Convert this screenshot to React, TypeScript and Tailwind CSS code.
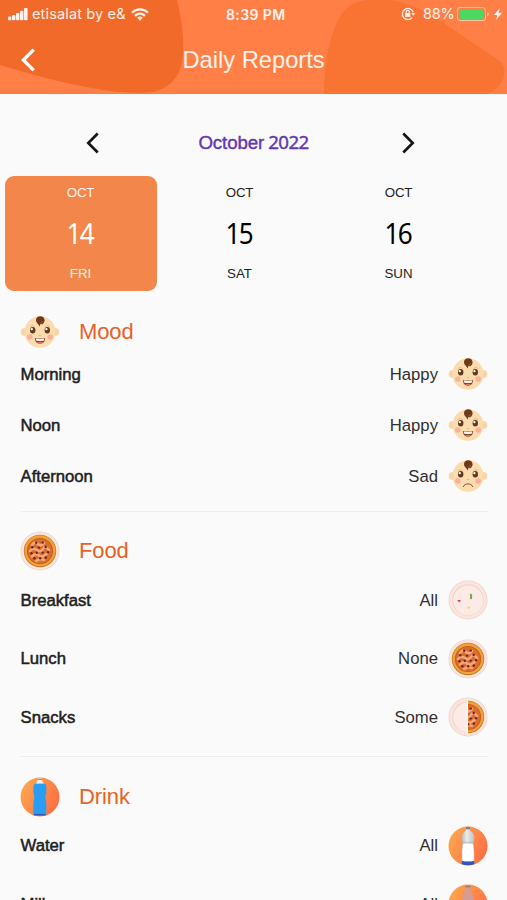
import React from "react";

const HELV = "font-['Liberation_Sans',Arial,sans-serif]";

function Chevron({ dir, className, w }: { dir: "left" | "right"; className: string; w: number }) {
  return (
    <svg viewBox="0 0 14 24" className={className} fill="none" stroke="currentColor" strokeWidth={w}>
      <path d={dir === "left" ? "M12.7 1.7L2.4 12l10.3 10.3" : "M1.3 1.7L11.6 12 1.3 22.3"} />
    </svg>
  );
}

function Baby({ sad = false }: { sad?: boolean }) {
  return (
    <svg viewBox="0 0 40 40" className="size-10 shrink-0">
      <circle cx="4.600" cy="20" r="3.900" fill="#f9d7aa" />
      <circle cx="35.400" cy="20" r="3.900" fill="#f9d7aa" />
      <circle cx="4.800" cy="20.300" r="1.700" fill="#f3cca0" />
      <circle cx="35.200" cy="20.300" r="1.700" fill="#f3cca0" />
      <ellipse cx="20" cy="20" rx="15.500" ry="15.800" fill="#fbdcaf" />
      <circle cx="9.800" cy="25" r="2.800" fill="#f8b29c" />
      <circle cx="30.200" cy="25" r="2.800" fill="#f8b29c" />
      <path d="M19.300 14.600c.4-1.900-3.400-3-3.300-6.500C16.100 5.400 18 4.300 20.100 4.300c2.700 0 4.500 1.600 4.500 4.100 0 2.900-2.700 4.600-4.500 3.700 0 1 .1 1.900-.8 2.500z" fill="#70391b" />
      <path d="M20.400 11.200c1.500.1 2.300-.7 2-2" fill="none" stroke="#b07a50" strokeWidth=".6" />
      <path d="M9.700 14.700q2.500-2.500 5 0M25.300 14.700q2.500-2.500 5 0" fill="none" stroke="#dba878" strokeWidth=".7" />
      <ellipse cx="12.700" cy="18.200" rx="2.700" ry="3.200" fill="#633920" />
      <ellipse cx="27.300" cy="18.200" rx="2.700" ry="3.200" fill="#633920" />
      <circle cx="11.800" cy="17.200" r="1.150" fill="#fff" />
      <circle cx="26.400" cy="17.200" r="1.150" fill="#fff" />
      <path d="M18.800 23.300q1.200 1 2.400 0" fill="none" stroke="#e3aa80" strokeWidth=".8" />
      {sad ? (
        <path d="M15.200 31c1.400-4.200 8.200-4.200 9.600 0" fill="none" stroke="#8c4c31" strokeWidth="1" />
      ) : (
        <>
          <path d="M14.800 26q5.200 1 10.400 0c-.2 3.700-2.300 5.700-5.200 5.700s-5-2-5.200-5.700z" fill="#8e3b2a" />
          <path d="M15.800 26.500q4.200.8 8.400 0v2q-4.200 1-8.400 0z" fill="#fff4e8" />
          <path d="M17.200 30.500q2.800-1.500 5.600 0-2.600 1.800-5.600 0z" fill="#ed7462" />
        </>
      )}
    </svg>
  );
}

const OLIVES = [
  [16.200, 11.800], [22.800, 11.600], [12.300, 16.200], [19, 16.600], [25.700, 16],
  [11.500, 22.300], [16.800, 21.800], [22.600, 21.600], [28, 21.200], [14.300, 27.300], [20.200, 27.200], [25.800, 26.500],
];

function PizzaTop() {
  return (
    <g>
      <circle cx="20" cy="20" r="16.200" fill="#c4741f" />
      <circle cx="20" cy="19.700" r="15.500" fill="#eda33b" />
      <circle cx="20" cy="20" r="13.100" fill="#c9581a" />
      <circle cx="20" cy="20" r="12.200" fill="#dd6c28" />
      <path
        d="M12 14q3-4 6-1t6-1M10 20q3-4 7-1t6-1 6 1M12 25.500q4-4 7-1t8-2M16 30q4-3 8-1"
        fill="none" stroke="#f4a67e" strokeWidth="2.500" strokeLinecap="round"
      />
      {OLIVES.map(([x, y], i) => (
        <circle key={i} cx={x} cy={y} r="1.200" fill="#5c2a2c" />
      ))}
    </g>
  );
}

function Plate({ kind }: { kind: "empty" | "full" | "half" }) {
  return (
    <svg viewBox="0 0 40 40" className="size-10 shrink-0">
      <circle cx="20" cy="20" r="19.500" fill="#efd4cd" />
      <circle cx="20" cy="20" r="18.700" fill="#fae5df" />
      <circle cx="20" cy="20" r="15.800" fill="#f3d3ca" />
      <circle cx="20.200" cy="20.400" r="14.900" fill="#fceae6" />
      {kind === "empty" && (
        <>
          <path d="M22.400 14q1.600 2 .2 5" fill="none" stroke="#69a93b" strokeWidth="1.900" />
          <path d="M9.300 20l3.700.3-1.900 2.100z" fill="#dc3345" />
          <circle cx="20.700" cy="27.600" r="1.200" fill="#e8d65c" />
        </>
      )}
      {kind === "full" && <PizzaTop />}
      {kind === "half" && (
        <>
          <defs>
            <clipPath id="half-pizza"><rect x="20" y="0" width="20" height="40" /></clipPath>
          </defs>
          <path d="M18.800 4h1.400v32h-1.400z" fill="#fff" />
          <g clipPath="url(#half-pizza)"><PizzaTop /></g>
        </>
      )}
    </svg>
  );
}

function Bottle({ kind }: { kind: "blue" | "clear" | "milk" }) {
  return (
    <svg viewBox="0 0 40 40" className="size-10 shrink-0">
      <defs>
        <linearGradient id={"disc-" + kind} x1="0" y1=".2" x2="1" y2=".75">
          <stop offset="0" stopColor="#fda84f" />
          <stop offset="1" stopColor="#ff6c43" />
        </linearGradient>
        <linearGradient id="glass" x1="0" x2="1">
          <stop offset="0" stopColor="#b4b7bb" />
          <stop offset=".4" stopColor="#ececec" />
          <stop offset="1" stopColor="#bcbfc4" />
        </linearGradient>
      </defs>
      <circle cx="20" cy="20" r="19.500" fill={"url(#disc-" + kind + ")"} />
      {kind === "blue" && (
        <>
          <path d="M17.500 1.300h4.500v2l2 3.500h-8l1.500-3.500z" fill="#e9edf0" />
          <path d="M17.500 2.300h4.500" stroke="#70808b" />
          <path d="M14.600 6.800h10.800q1 1.500.9 3v6l-1 4 1 6v11.700H13.400V25.800l1-6-1-4v-6z" fill="#279df4" />
          <path d="M14 37h11.700v1.500H14z" fill="#3155a8" />
        </>
      )}
      {kind === "clear" && (
        <>
          <path d="M18 1.500h4v3q4.400 2.600 4.400 7.500l-1 5.500.9 8v11.500q-6.300 2-12.600 0V25.500l.9-8-1-5.500q0-4.900 4.400-7.500z" fill="url(#glass)" />
          <path d="M18 .8h4V3.300h-4z" fill="#6d8796" />
          <path d="M15 18h10l.7 7v10H14.300V25z" fill="#fff" />
          <path d="M13.700 35q6.300 1 12.600 0v3.300q-6.300 1.700-12.600 0z" fill="#3154bd" />
          <path d="M15 15.800q5 1.300 10 0" fill="none" stroke="#aeb3b9" strokeWidth=".7" />
        </>
      )}
      {kind === "milk" && (
        <>
          <path d="M17.500 1.500h4.800l.4 5 3.300 10V37H14V16.500l3-10z" fill="#d59b95" />
          <path d="M17.500 2.500h4.800" stroke="#947780" strokeWidth="1.500" />
        </>
      )}
    </svg>
  );
}

function Row({ label, value, icon, height }: { label: string; value: string; icon: React.ReactNode; height: string }) {
  return (
    <div className={"flex items-center " + height}>
      <span className="ml-[0.500px] text-[16.700px] text-[#202020] [-webkit-text-stroke:0.500px_#202020]">{label}</span>
      <span className="ml-auto mr-2.5 text-[16.700px] text-[#303030]">{value}</span>
      {icon}
    </div>
  );
}

function Heading({ icon, children }: { icon: React.ReactNode; children: string }) {
  return (
    <div className="flex h-10 items-center gap-[19px]">
      {icon}
      <h2 className="pb-px text-[22px] tracking-[-0.100px] text-[#ea6126]">{children}</h2>
    </div>
  );
}

function StatusBar() {
  return (
    <div className="flex h-7 items-center pl-2 pr-[5px] font-[Inter,sans-serif] text-white/90">
      <svg viewBox="0 0 20 13" className="h-[13px] w-5" fill="currentColor">
        <rect x="0" y="8.500" width="3.400" height="3.700" rx="1" />
        <rect x="4" y="7" width="3.400" height="5.200" rx="1" />
        <rect x="8" y="5" width="3.400" height="7.200" rx="1" />
        <rect x="12" y="2.800" width="3.400" height="9.400" rx="1" />
        <rect x="16" y="0" width="3.600" height="12.200" rx="1" />
      </svg>
      <span className="ml-1 w-[98px] whitespace-nowrap text-[14.500px] tracking-[0.150px]">etisalat by e&amp;</span>
      <svg viewBox="0 0 18 13" className="ml-px h-[13px] w-[18px]" fill="none" stroke="currentColor" strokeWidth="2.300">
        <path d="M1 4.800c4.500-4.500 11.500-4.500 16 0M4 7.900c3-2.900 7-2.900 10 0" />
        <path d="M9 12.700L6.200 9.800q2.800-2.400 5.600 0z" fill="currentColor" stroke="none" />
      </svg>
      <span className="ml-[77px] w-[62px] whitespace-nowrap text-[14px] font-semibold tracking-[0.400px]">8:39 PM</span>
      <svg viewBox="0 0 14 14" className="ml-[113px] size-3.5" fill="none" stroke="currentColor" strokeWidth="1.200">
        <path d="M11.300 10.600A5.600 5.600 0 1 1 12.300 5.300" />
        <path d="M10.300 6h4L12.300 8.800z" fill="currentColor" stroke="none" />
        <rect x="4" y="6" width="5.400" height="3.900" fill="currentColor" stroke="none" />
        <path d="M5.200 6V4.800a1.500 1.500 0 0 1 3 0V6" />
      </svg>
      <span className="ml-2 w-[34px] whitespace-nowrap text-[14.500px] tracking-[-0.200px]">88%</span>
      <span className="flex h-[14px] w-[29px] rounded-[3px] border border-white/50 p-[1.500px]">
        <span className="w-[23px] rounded-[1px] bg-[#4bd964]" />
      </span>
      <span className="ml-px h-1 w-[2px] rounded-r bg-white/50" />
      <svg viewBox="0 0 8 12" className="ml-auto h-3 w-2" fill="currentColor">
        <path d="M5.800 0L0 7h3.300L2.200 12 8 4.800H4.700z" />
      </svg>
    </div>
  );
}

const DAYS = [
  { day: "14", name: "FRI", active: true },
  { day: "15", name: "SAT", active: false },
  { day: "16", name: "SUN", active: false },
];

export default function App() {
  return (
    <div className={"h-[900px] w-[507px] overflow-hidden bg-[#fafafa] " + HELV}>
      <header className="relative h-[93.500px] overflow-hidden bg-[#ff7f46]">
        <svg viewBox="0 0 507 94" className="absolute inset-0 h-[94px] w-[507px]">
          <path d="M0 0H177C182 20 184 38 183 55C181 80 166 93 140 93C101 93 50 80 0 65Z" fill="#f26a29" />
          <path d="M324 94C324 69 328 42 337 22Q346 2 367 0H392Q416 5 436 18L497 59Q507 66 504 76Q501 89 486 94Z" fill="#f97332" />
        </svg>
        <div className="relative">
          <StatusBar />
          <div className="flex h-[64px] items-center pl-[21px] text-white">
            <Chevron dir="left" w={3.300} className="h-6 w-3.5" />
            <h1 className="ml-[147.500px] whitespace-nowrap pt-0.5 text-[23.700px] text-white/90">Daily Reports</h1>
          </div>
        </div>
      </header>

      <div className="flex h-[82px] items-center justify-between pl-[86px] pr-[92px] pt-4 text-[#151515]">
        <Chevron dir="left" w={2.900} className="h-[22px] w-[13px]" />
        <div className="ml-[6px] whitespace-nowrap text-[18.700px] tracking-[-0.100px] text-[#6437b4] [-webkit-text-stroke:0.400px_#6437b4]">
          October <span className="-ml-px font-['Noto_Sans',sans-serif] tracking-[-0.600px]">2022</span>
        </div>
        <Chevron dir="right" w={2.900} className="h-[22px] w-[13px]" />
      </div>

      <div className="flex gap-[7px] pl-[4.500px]">
        {DAYS.map((d) => (
          <div
            key={d.day}
            className={
              "flex h-[115px] w-[152px] shrink-0 flex-col items-center justify-between rounded-[9px] pt-[7px] pb-[7px] text-[13.300px] " +
              (d.active ? "bg-[#f3864a] text-white/90" : "text-[#222]")
            }
          >
            <span className="leading-5 tracking-[-0.200px]">OCT</span>
            <span
              className={
                "scale-x-90 pb-px pr-[2px] font-['Noto_Sans',sans-serif] text-[29px] leading-8 tracking-[-2px] " +
                (d.active ? "text-white" : "text-black")
              }
            >
              {d.day}
            </span>
            <span className="leading-5">{d.name}</span>
          </div>
        ))}
      </div>

      <main className="pl-5 pr-[19px] pt-[21px]">
        <section>
          <Heading icon={<Baby />}>Mood</Heading>
          <div className="-mt-[2.800px]">
            <Row height="h-[51px]" label="Morning" value="Happy" icon={<Baby />} />
            <Row height="h-[51px]" label="Noon" value="Happy" icon={<Baby />} />
            <Row height="h-[51px]" label="Afternoon" value="Sad" icon={<Baby sad />} />
          </div>
        </section>
        <section className="mt-[8.800px] border-t border-[#eeeeee] pt-[19.500px]">
          <Heading icon={<Plate kind="full" />}>Food</Heading>
          <Row height="h-[58.500px]" label="Breakfast" value="All" icon={<Plate kind="empty" />} />
          <Row height="h-[58.500px]" label="Lunch" value="None" icon={<Plate kind="full" />} />
          <Row height="h-[58.500px]" label="Snacks" value="Some" icon={<Plate kind="half" />} />
        </section>
        <section className="mt-[9.500px] border-t border-[#eeeeee] pt-[19.700px]">
          <Heading icon={<Bottle kind="blue" />}>Drink</Heading>
          <Row height="h-[58.500px]" label="Water" value="All" icon={<Bottle kind="clear" />} />
          <Row height="h-[58.500px]" label="Milk" value="All" icon={<Bottle kind="milk" />} />
        </section>
      </main>
    </div>
  );
}
